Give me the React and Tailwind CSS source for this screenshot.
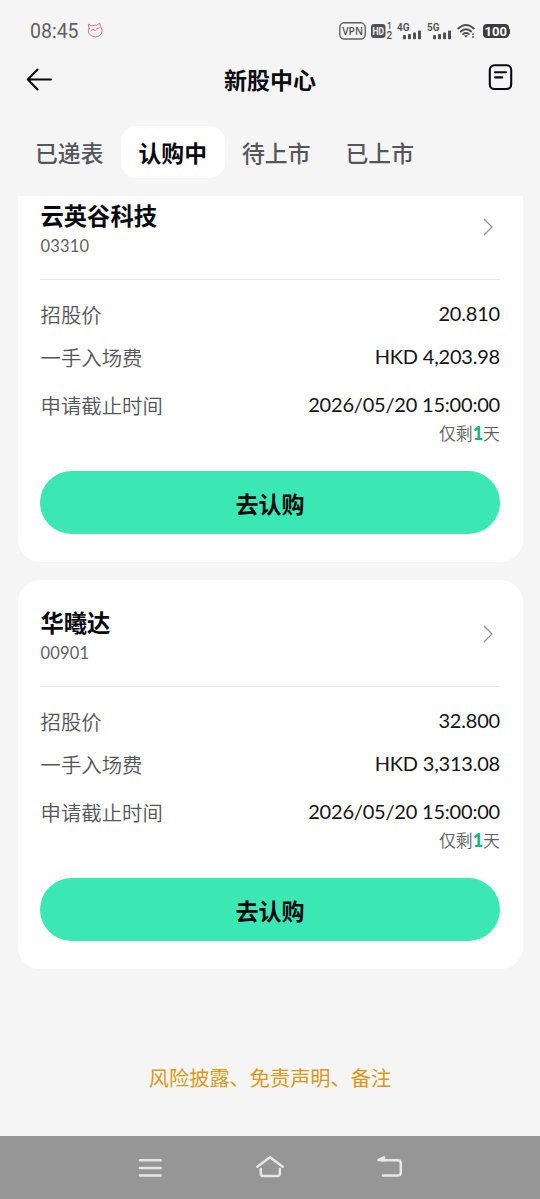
const offers = [
  { name: '云英谷科技', code: '03310', price: '20.810', fee: 'HKD 4,203.98', deadline: '2026/05/20 15:00:00', days: 1 },
  { name: '华曦达', code: '00901', price: '32.800', fee: 'HKD 3,313.08', deadline: '2026/05/20 15:00:00', days: 1 },
];

function Signal({ label }) {
  return (
    <svg width="25" height="18" viewBox="0 0 25 18" fill="#505052">
      <text x="0" y="9.3" fontSize="11" fontWeight="600" fontFamily="Roboto, sans-serif" textLength="12.5" lengthAdjust="spacingAndGlyphs">{label}</text>
      <rect x="6" y="13" width="3" height="4.2" rx=".8" />
      <rect x="11" y="12" width="3" height="5.2" rx=".8" />
      <rect x="16" y="10.5" width="3" height="6.7" rx=".8" />
      <rect x="21" y="8.5" width="3" height="8.7" rx=".8" />
    </svg>
  );
}

function StatusBar() {
  return (
    <div className="flex h-[62px] shrink-0 items-center pl-[30px] font-[Roboto,sans-serif] text-[#606062]">
      <span className="mt-px text-[19.5px] leading-6">08:45</span>
      <svg className="ml-[8px] -mt-px" width="17" height="17" viewBox="0 0 17 17" fill="none" stroke="#d4748a" strokeWidth="1" strokeLinecap="round" strokeLinejoin="round">
        <path d="M2 6.5 1.3 2.2 5 4Q7.5 3 9.8 3.2L12.6 1 13.6 4.8Q16.2 8 14.8 11.2 12.8 14.8 8.4 15 3.6 14.8 1.8 11.2.9 8.5 2 6.5Z" />
        <path d="M4.2 8.3 6.8 7.5M9.6 6.8 12.2 5.8M7.4 8.4Q8.2 9 9 8" />
      </svg>
      <div className="ml-auto flex items-center pr-[30px]">
        <svg width="27" height="18" viewBox="0 0 27 18">
          <rect x=".8" y=".8" width="25.4" height="16.2" rx="4.6" fill="none" stroke="#606062" strokeWidth="1.4" />
          <text x="3.2" y="13.2" fontSize="11.5" fontWeight="600" fontFamily="Open Sans, sans-serif" fill="#505052" textLength="20.8" lengthAdjust="spacingAndGlyphs">VPN</text>
        </svg>
        <svg className="ml-[5px]" width="23" height="18" viewBox="0 0 23 18" fontFamily="Roboto, sans-serif" fontWeight="700">
          <rect x="0" y="2" width="14.5" height="14" rx="3" fill="#505052" />
          <text x="1.5" y="12.6" fontSize="10" textLength="11.5" lengthAdjust="spacingAndGlyphs" fill="#f5f5f5">HD</text>
          <text x="16" y="7.3" fontSize="8.5" fontWeight="500" fill="#505052">1</text>
          <text x="15.5" y="16.6" fontSize="10" fontWeight="500" fill="#505052">2</text>
        </svg>
        <div className="ml-[3px] -mt-px flex gap-[5px]">
          <Signal label="4G" />
          <Signal label="5G" />
        </div>
        <svg className="ml-[5px]" width="19" height="16" viewBox="0 0 19 16" fill="none" stroke="#505052" strokeWidth="1.9" strokeLinecap="round">
          <path d="M1.2 5.5Q9 -1.5 16.8 5.5M3.8 8.4Q9 4 14.2 8.4M6.2 11.1Q9 9 11.8 11.1" />
          <path d="M8 13 9 14.2 10 13Z" fill="#505052" strokeWidth="1" />
          <path d="M16 11.2v.1M16 14v.1" strokeWidth="1.8" />
        </svg>
        <span className="ml-[7px] flex h-[14px] w-[25.5px] items-center justify-center rounded-[4px] bg-[#3c3c3e] text-[13px] leading-none font-bold text-white">100</span>
        <span className="h-[5px] w-[1.5px] rounded-r bg-[#3c3c3e]" />
      </div>
    </div>
  );
}

function Header() {
  return (
    <header className="flex h-[35px] shrink-0 items-center justify-between pr-[26px] pl-[26px]">
      <svg width="28" height="26" viewBox="0 0 28 26" fill="none" stroke="#08080f" strokeWidth="2.1" strokeLinecap="round" strokeLinejoin="round">
        <path d="M25 12.5H1.8M11.6 2.5 1.8 12.5 11.6 22.5" />
      </svg>
      <h1 className="-mt-[2px] text-[23px] leading-[34px] font-bold">新股中心</h1>
      <svg className="-mt-[5px]" width="28" height="28" viewBox="0 0 28 28" fill="none" stroke="#08080f" strokeWidth="2.1" strokeLinecap="round">
        <rect x="3.8" y="2.3" width="21.4" height="23.7" rx="4.5" />
        <path d="M9 9.3h11M9 14.4h7.2" />
      </svg>
    </header>
  );
}

function Tabs() {
  const tab = 'flex h-[52px] w-[103.5px] items-center justify-center rounded-[15px] pt-[2px]';
  return (
    <nav className="mt-[29px] flex h-[70px] shrink-0 pl-[17.5px] text-[22.8px] font-medium text-[#55565b]">
      <div className={tab}>已递表</div>
      <div className={tab + ' bg-white font-bold text-[#08080f]'}>认购中</div>
      <div className={tab}>待上市</div>
      <div className={tab}>已上市</div>
    </nav>
  );
}

function Row({ label, value, className }) {
  return (
    <div className={'flex items-center justify-between ' + className}>
      <span className="pl-[0.5px] text-[20.4px] leading-[30px] font-[350] text-[#55565b]">{label}</span>
      <span className="-mt-[1.5px] font-[Lato,sans-serif] text-[20px] leading-[30px] tracking-[-0.2px] text-[#131318]">{value}</span>
    </div>
  );
}

function OfferCard({ offer }) {
  return (
    <article className="flex h-[389px] shrink-0 flex-col rounded-[22px] bg-white px-[22.5px]">
      <div className="flex h-[107px] shrink-0 items-center justify-between border-b border-[#e8e8e9]">
        <div className="pt-[4px] pl-[0.5px]">
          <h2 className="text-[23.3px] leading-[34px] font-bold">{offer.name}</h2>
          <p className="pt-px font-[Lato,sans-serif] text-[16.5px] leading-[26px] tracking-[0.2px] text-[#606166]">{offer.code}</p>
        </div>
        <svg className="mr-[6px] mt-px" width="12" height="20" viewBox="0 0 12 20" fill="none" stroke="#929397" strokeWidth="1.3">
          <path d="M2 2l8 8-8 8" />
        </svg>
      </div>
      <Row className="mt-[19px]" label="招股价" value={offer.price} />
      <Row className="mt-[13px]" label="一手入场费" value={offer.fee} />
      <Row className="mt-[18px]" label="申请截止时间" value={offer.deadline} />
      <p className="text-right text-[16.9px] leading-[26px] font-[350] text-[#5e5f63]">
        仅剩<b className="font-[Lato,sans-serif] text-[18px] font-black text-[#16b37f]">{offer.days}</b>天
      </p>
      <button className="mt-[24.5px] h-[63px] shrink-0 rounded-full bg-[#3be8b4] pt-[2px] text-[23px] leading-[34px] font-bold">去认购</button>
    </article>
  );
}

function NavBar() {
  return (
    <footer className="flex h-[63px] shrink-0 items-center justify-center gap-[90px] bg-[#969696]">
      <svg width="30" height="30" viewBox="0 0 30 30" fill="none" stroke="#e6e6e6" strokeWidth="2.6" strokeLinecap="round">
        <path d="M5 7.3h20.5M5 15h20.5M5 22.5h20.5" />
      </svg>
      <svg width="30" height="30" viewBox="0 0 30 30" fill="none" stroke="#e6e6e6" strokeWidth="2.5" strokeLinecap="round" strokeLinejoin="round">
        <path d="M2.3 13.8 15 4.2 27.7 13.8M5.8 16v4.4q0 2.5 2.5 2.5h14q2.5 0 2.5-2.5V16" />
      </svg>
      <svg width="30" height="30" viewBox="0 0 30 30" fill="none" stroke="#e6e6e6" strokeWidth="2.5" strokeLinecap="round" strokeLinejoin="round">
        <path d="M7 7.3h16q2.8 0 2.8 2.8v9.6q0 2.8-2.8 2.8H8" />
        <path d="M3.6 7 9 4.4v2.8Z" fill="#e6e6e6" />
      </svg>
    </footer>
  );
}

export default function App() {
  return (
    <div className="flex h-[1199px] w-[540px] flex-col overflow-hidden bg-[#f5f5f5] font-['Noto_Sans_CJK_SC',sans-serif] text-[#08080f]">
      <StatusBar />
      <Header />
      <Tabs />
      <main className="flex min-h-0 flex-1 flex-col overflow-hidden pr-[17.5px] pl-[17.5px]">
        <div className="-mt-[23px] flex flex-col gap-[18px]">
          {offers.map((offer) => <OfferCard key={offer.code} offer={offer} />)}
          <p className="mt-[76px] text-center text-[20.2px] leading-[30px] text-[#db9718]">风险披露、免责声明、备注</p>
        </div>
      </main>
      <NavBar />
    </div>
  );
}
